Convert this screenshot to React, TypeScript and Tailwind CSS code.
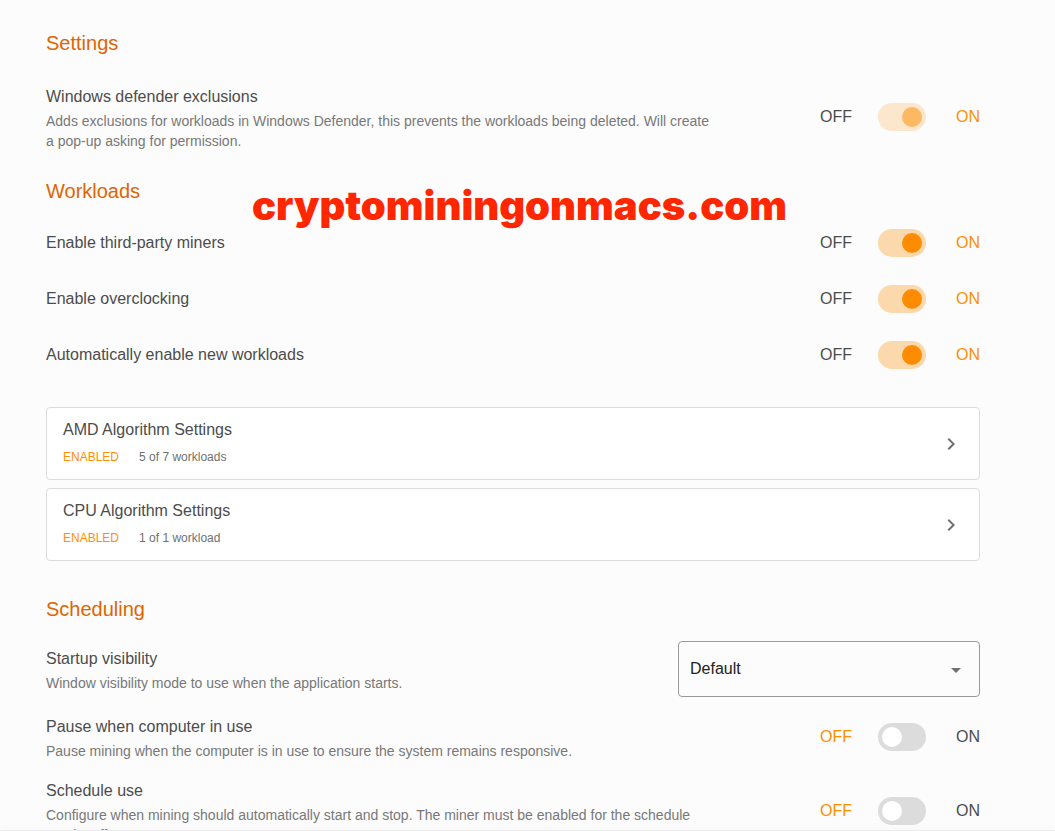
import React, { useState } from "react";

// text block on the left side of a row
function RowText({
  id,
  title,
  description,
}: {
  id: string;
  title: string;
  description?: string;
}) {
  return (
    <div className="max-w-[668px] flex-1">
      <label htmlFor={id} className="block text-base leading-7 text-[#4c4c4c]">
        {title}
      </label>
      {description && (
        <p className="text-sm leading-5 text-[#787878]">{description}</p>
      )}
    </div>
  );
}

// row with an off / on switch
function SwitchRow({
  id,
  title,
  description,
  defaultOn = false,
  disabled = false,
}: {
  id: string;
  title: string;
  description?: string;
  defaultOn?: boolean;
  disabled?: boolean;
}) {
  const [on, setOn] = useState(defaultOn);

  return (
    <div
      className={`flex items-center justify-between ${
        description ? "" : "h-14"
      }`}
    >
      <RowText id={id} title={title} description={description} />
      <div className="flex shrink-0 items-center text-base leading-7">
        <span className={on ? "text-[#4c4c4c]" : "text-[#ff8f00]"}>OFF</span>
        <input
          id={id}
          type="checkbox"
          role="switch"
          checked={on}
          disabled={disabled}
          onChange={(e) => setOn(e.target.checked)}
          className="mr-[30px] ml-[26px] h-7 w-12 cursor-pointer appearance-none rounded-full bg-[#dcdcdc] p-1 before:block before:size-5 before:rounded-full before:bg-white checked:bg-[#fcd8ad] checked:before:translate-x-5 checked:before:bg-[#ff8c00] disabled:cursor-default disabled:opacity-60"
        />
        <span className={on ? "text-[#ff8f00]" : "text-[#4c4c4c]"}>ON</span>
      </div>
    </div>
  );
}

function AlgorithmCard({ title, count }: { title: string; count: string }) {
  return (
    <button
      type="button"
      className="flex w-full cursor-pointer items-center justify-between rounded border border-[#dcdcdc] bg-white px-4 py-2 text-left"
    >
      <span className="block">
        <span className="block text-base leading-7 text-[#4c4c4c]">
          {title}
        </span>
        <span className="flex gap-5 text-xs leading-[27px]">
          <span className="text-[#ff8f00]">ENABLED</span>
          <span className="text-[#707070]">{count}</span>
        </span>
      </span>
      <svg viewBox="0 0 24 24" className="size-6" aria-hidden="true">
        <path
          d="M10 6L8.59 7.41 13.17 12l-4.58 4.59L10 18l6-6z"
          fill="#707070"
        />
      </svg>
    </button>
  );
}

function Heading({ children }: { children: React.ReactNode }) {
  return <h2 className="text-xl leading-8 text-[#e06500]">{children}</h2>;
}

export default function App() {
  const [visibility, setVisibility] = useState("default");

  return (
    <div className="relative flex h-screen flex-col bg-[#fcfcfc] font-['Liberation_Sans',Arial,sans-serif]">
      <main className="min-h-0 flex-1 overflow-hidden pt-[27px] pr-[75px] pl-[46px]">
        <section>
          <Heading>Settings</Heading>
          <div className="mt-6">
            <SwitchRow
              id="defender"
              title="Windows defender exclusions"
              description="Adds exclusions for workloads in Windows Defender, this prevents the workloads being deleted. Will create a pop-up asking for permission."
              defaultOn
              disabled
            />
          </div>
        </section>

        <section className="mt-6">
          <Heading>Workloads</Heading>
          <div className="mt-2">
            <SwitchRow
              id="third-party"
              title="Enable third-party miners"
              defaultOn
            />
            <SwitchRow id="overclocking" title="Enable overclocking" defaultOn />
            <SwitchRow
              id="auto-enable"
              title="Automatically enable new workloads"
              defaultOn
            />
          </div>
          <div className="mt-6 flex flex-col gap-2">
            <AlgorithmCard
              title="AMD Algorithm Settings"
              count="5 of 7 workloads"
            />
            <AlgorithmCard
              title="CPU Algorithm Settings"
              count="1 of 1 workload"
            />
          </div>
        </section>

        <section className="mt-8">
          <Heading>Scheduling</Heading>
          <div className="mt-4 flex flex-col gap-4">
            <div className="flex items-center justify-between">
              <RowText
                id="visibility"
                title="Startup visibility"
                description="Window visibility mode to use when the application starts."
              />
              <div className="relative w-[302px] shrink-0">
                <select
                  id="visibility"
                  value={visibility}
                  onChange={(e) => setVisibility(e.target.value)}
                  className="h-14 w-full appearance-none rounded border border-[#999999] bg-transparent pr-10 pl-[11px] text-base text-[#222222]"
                >
                  <option value="default">Default</option>
                  <option value="minimized">Minimized</option>
                  <option value="hidden">Hidden</option>
                </select>
                <svg
                  viewBox="0 0 24 24"
                  className="pointer-events-none absolute top-4 right-3 size-6"
                  aria-hidden="true"
                >
                  <path d="M7 11l5 5 5-5z" fill="#707070" />
                </svg>
              </div>
            </div>
            <SwitchRow
              id="pause"
              title="Pause when computer in use"
              description="Pause mining when the computer is in use to ensure the system remains responsive."
            />
            <SwitchRow
              id="schedule"
              title="Schedule use"
              description={
                "Configure when mining should automatically start and stop. The miner must be enabled for the schedule to\u00a0take effect."
              }
            />
          </div>
        </section>
      </main>

      {/* top edge of the bottom bar */}
      <footer className="z-10 h-px bg-[#ececec] shadow-[0_0_8px_rgba(0,0,0,0.15)]" />

      {/* watermark */}
      <p className="pointer-events-none absolute inset-x-0 top-[178px] pr-4 text-center font-[Inter,sans-serif] text-[40px] leading-[56px] font-black text-[#ff2600]">
        cryptominingonmacs.com
      </p>
    </div>
  );
}
